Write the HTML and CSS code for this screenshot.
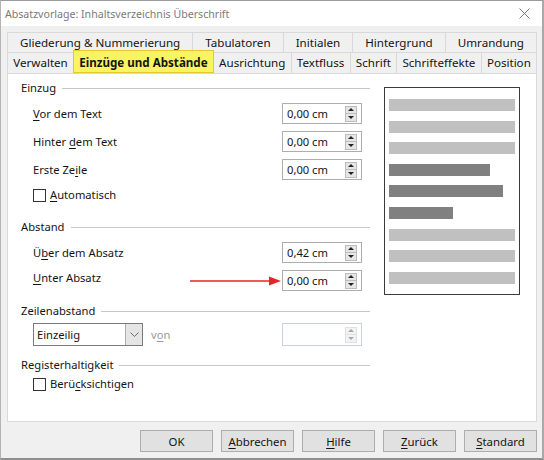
FILE: index.html
```html
<!DOCTYPE html>
<html lang="de">
<head>
    <meta charset="UTF-8">
    <title>Absatzvorlage: Inhaltsverzeichnis Überschrift</title>
    <link rel="stylesheet" href="styles.css">
</head>
<body>
<div class="dialog">

    <div class="titlebar">
        <span class="title">Absatzvorlage: Inhaltsverzeichnis Überschrift</span>
        <svg class="close" width="11" height="11" viewBox="0 0 11 11">
            <path d="M0.5 0.5 L10.5 10.5 M10.5 0.5 L0.5 10.5" stroke="#7a7a7a" stroke-width="1"/>
        </svg>
    </div>

    <div class="content">
        <!-- Registerkarten, zwei Reihen -->
        <div class="tab-row">
            <div class="tab">Gliederung &amp; Nummerierung</div>
            <div class="tab">Tabulatoren</div>
            <div class="tab">Initialen</div>
            <div class="tab">Hintergrund</div>
            <div class="tab">Umrandung</div>
        </div>
        <div class="tab-row tab-row-front">
            <div class="tab">Verwalten</div>
            <div class="tab active">Einzüge und Abstände</div>
            <div class="tab">Ausrichtung</div>
            <div class="tab">Textfluss</div>
            <div class="tab">Schrift</div>
            <div class="tab">Schrifteffekte</div>
            <div class="tab">Position</div>
        </div>

        <div class="panel">
            <div class="settings">

                <div class="group group-indent">
                    <div class="legend">Einzug</div>
                    <div class="field">
                        <span><u>V</u>or dem Text</span>
                        <div class="spin"><span>0,00 cm</span><div class="spin-btn"><i class="up"></i><i class="down"></i></div></div>
                    </div>
                    <div class="field">
                        <span>Hinter <u>d</u>em Text</span>
                        <div class="spin"><span>0,00 cm</span><div class="spin-btn"><i class="up"></i><i class="down"></i></div></div>
                    </div>
                    <div class="field">
                        <span>Erste Ze<u>i</u>le</span>
                        <div class="spin"><span>0,00 cm</span><div class="spin-btn"><i class="up"></i><i class="down"></i></div></div>
                    </div>
                    <div class="check"><span class="box"></span><u>A</u>utomatisch</div>
                </div>

                <div class="group group-spacing">
                    <div class="legend">Abstand</div>
                    <div class="field">
                        <span>Ü<u>b</u>er dem Absatz</span>
                        <div class="spin"><span>0,42 cm</span><div class="spin-btn"><i class="up"></i><i class="down"></i></div></div>
                    </div>
                    <div class="field field-top">
                        <span><u>U</u>nter Absatz</span>
                        <svg class="arrow" width="92" height="10" viewBox="0 0 92 10">
                            <line x1="0" y1="5" x2="80" y2="5" stroke="#e3262a" stroke-width="1.6"/>
                            <polygon points="79,0.5 91,5 79,9.5" fill="#e3262a"/>
                        </svg>
                        <div class="spin"><span>0,00 cm</span><div class="spin-btn"><i class="up"></i><i class="down"></i></div></div>
                    </div>
                </div>

                <div class="group group-lines">
                    <div class="legend">Zeilenabstand</div>
                    <div class="field">
                        <div class="select">
                            <span>Einzeilig</span>
                            <div class="select-btn">
                                <svg width="9" height="6" viewBox="0 0 9 6"><polyline points="0.5,0.5 4.5,4.5 8.5,0.5" fill="none" stroke="#6d6d6d" stroke-width="1"/></svg>
                            </div>
                        </div>
                        <span class="muted">v<u>o</u>n</span>
                        <div class="spin spin-disabled"><span></span><div class="spin-btn"><i class="up"></i><i class="down"></i></div></div>
                    </div>
                </div>

                <div class="group group-register">
                    <div class="legend">Registerhaltigkeit</div>
                    <div class="check"><span class="box"></span>Berü<u>c</u>ksichtigen</div>
                </div>

            </div>

            <!-- Vorschau -->
            <div class="preview">
                <div class="bar"></div>
                <div class="bar"></div>
                <div class="bar"></div>
                <div class="bar dark" style="width: 101px"></div>
                <div class="bar dark" style="width: 114px"></div>
                <div class="bar dark" style="width: 64px"></div>
                <div class="bar"></div>
                <div class="bar"></div>
                <div class="bar"></div>
            </div>
        </div>

        <div class="buttons">
            <button>OK</button>
            <button><u>A</u>bbrechen</button>
            <button><u>H</u>ilfe</button>
            <button><u>Z</u>urück</button>
            <button><u>S</u>tandard</button>
        </div>
    </div>

</div>
</body>
</html>
```

FILE: styles.css
```css
body {
    margin: 0;
    padding: 0;
    overflow: hidden;
    font-family: "Noto Sans", "Open Sans", sans-serif;
    font-size: 11.2px;
    color: #141414;
}

u {
    text-decoration-thickness: 1px;
    text-underline-offset: 2px;
}

.dialog {
    width: 544px;
    height: 460px;
    box-sizing: border-box;
    display: flex;
    flex-direction: column;
    border-top: 1px solid #9c9c9c;
    border-left: 1px solid #b4b4b4;
    border-right: 2px solid #a9a9a9;
    border-bottom: 2px solid #8f8f8f;
    background-color: #f0f0f0;
}

.titlebar {
    height: 25px;
    background-color: #ffffff;
    display: flex;
    align-items: center;
    padding-left: 4px;
    flex-shrink: 0;
}

.title {
    color: #7a7a7a;
    font-size: 10.6px;
}

.close {
    margin-left: auto;
    margin-right: 12px;
}

.content {
    flex: 1;
    padding: 6px 5px 0 6px;
    display: flex;
    flex-direction: column;
}

/* Registerkarten */
.tab-row {
    display: flex;
    height: 20px;
    padding-left: 1px;
}

.tab-row-front {
    height: 21px;
}

.tab {
    flex: 1 1 auto;
    text-align: center;
    font-size: 11.6px;
    line-height: 19px;
    border: 1px solid #d9d9d9;
    border-bottom: none;
    margin-left: -1px;
    background-color: #f0f0f0;
    white-space: nowrap;
}

.tab-row-front .tab {
    line-height: 20px;
}

.tab.active {
    position: relative;
    margin-top: -2px;
    height: 23px;
    line-height: 23px;
    font-weight: bold;
    background-color: #fbf461;
    border: 1px solid #e2c92c;
    box-sizing: border-box;
}

/* Inhalt der Karte */
.panel {
    height: 349px;
    box-sizing: border-box;
    background-color: #ffffff;
    border: 1px solid #d9d9d9;
    display: flex;
    align-items: flex-start;
}

.settings {
    width: 362px;
    padding-left: 13px;
    box-sizing: border-box;
}

.group {
    display: flex;
    flex-direction: column;
    gap: 7px;
}

.group-indent {
    margin-top: 6px;
}

.group-spacing {
    margin-top: 16px;
}

.group-lines {
    margin-top: 12px;
    gap: 5px;
}

.group-register {
    margin-top: 12px;
    gap: 3px;
}

.legend {
    display: flex;
    align-items: center;
    gap: 6px;
    line-height: 16px;
}

.legend::after {
    content: "";
    flex: 1;
    height: 1px;
    background-color: #c8c8c8;
}

.field {
    position: relative;
    display: flex;
    align-items: center;
    height: 21px;
    margin-left: 12px;
    padding-right: 8px;
}

.field-top > span {
    align-self: flex-start;
    margin-top: 0;
}

.spin {
    margin-left: auto;
    width: 80px;
    height: 21px;
    box-sizing: border-box;
    border: 1px solid #adadad;
    background-color: #ffffff;
    display: flex;
    align-items: center;
    padding-left: 4px;
}

.spin-btn {
    margin-left: auto;
    margin-right: 4px;
    width: 12px;
    height: 16px;
    box-sizing: border-box;
    border: 1px solid #bcbcbc;
    background-color: #e6e6e6;
    display: flex;
    flex-direction: column;
}

.spin-btn i {
    flex: 1;
    display: flex;
    align-items: center;
    justify-content: center;
}

.spin-btn i.down {
    border-top: 1px solid #bcbcbc;
}

.spin-btn i::before {
    content: "";
    border-left: 3px solid transparent;
    border-right: 3px solid transparent;
}

.spin-btn i.up::before {
    border-bottom: 3px solid #222;
}

.spin-btn i.down::before {
    border-top: 3px solid #222;
}

.spin-disabled {
    height: 23px;
    border-color: #c5d2df;
}

.spin-disabled .spin-btn {
    border-color: #e0e0e0;
    background-color: #f3f3f3;
}

.spin-disabled .spin-btn i.down {
    border-top-color: #e0e0e0;
}

.spin-disabled .spin-btn i.up::before {
    border-bottom-color: #a8a8a8;
}

.spin-disabled .spin-btn i.down::before {
    border-top-color: #a8a8a8;
}

.arrow {
    position: absolute;
    left: 157px;
    top: 6px;
}

.check {
    display: flex;
    align-items: center;
    line-height: 16px;
    margin-left: 12px;
}

.box {
    width: 13px;
    height: 13px;
    box-sizing: border-box;
    border: 1px solid #333333;
    background-color: #ffffff;
    margin-right: 4px;
}

.select {
    width: 110px;
    height: 23px;
    box-sizing: border-box;
    border: 1px solid #7a7a7a;
    background-color: #ffffff;
    display: flex;
    align-items: center;
    padding-left: 3px;
}

.select-btn {
    margin-left: auto;
    width: 17px;
    height: 21px;
    box-sizing: border-box;
    border-left: 1px solid #adadad;
    background-color: #e5e5e5;
    display: flex;
    align-items: center;
    justify-content: center;
}

.muted {
    color: #9a9a9a;
    margin-left: 8px;
}

/* Vorschau rechts */
.preview {
    margin-left: 14px;
    margin-top: 13px;
    width: 136px;
    height: 208px;
    box-sizing: border-box;
    border: 1px solid #3a3a3a;
    padding: 11px 4px 0 4px;
    display: flex;
    flex-direction: column;
    gap: 9.6px;
}

.bar {
    height: 12px;
    width: 126px;
    background-color: #c0c0c0;
}

.bar.dark {
    background-color: #808080;
}

.buttons {
    display: flex;
    justify-content: flex-end;
    gap: 8px;
    margin-top: 8px;
}

.buttons button {
    width: 73px;
    height: 22px;
    padding: 0;
    font-family: inherit;
    font-size: 11.4px;
    color: #141414;
    background-color: #e1e1e1;
    border: 1px solid #adadad;
}
```
